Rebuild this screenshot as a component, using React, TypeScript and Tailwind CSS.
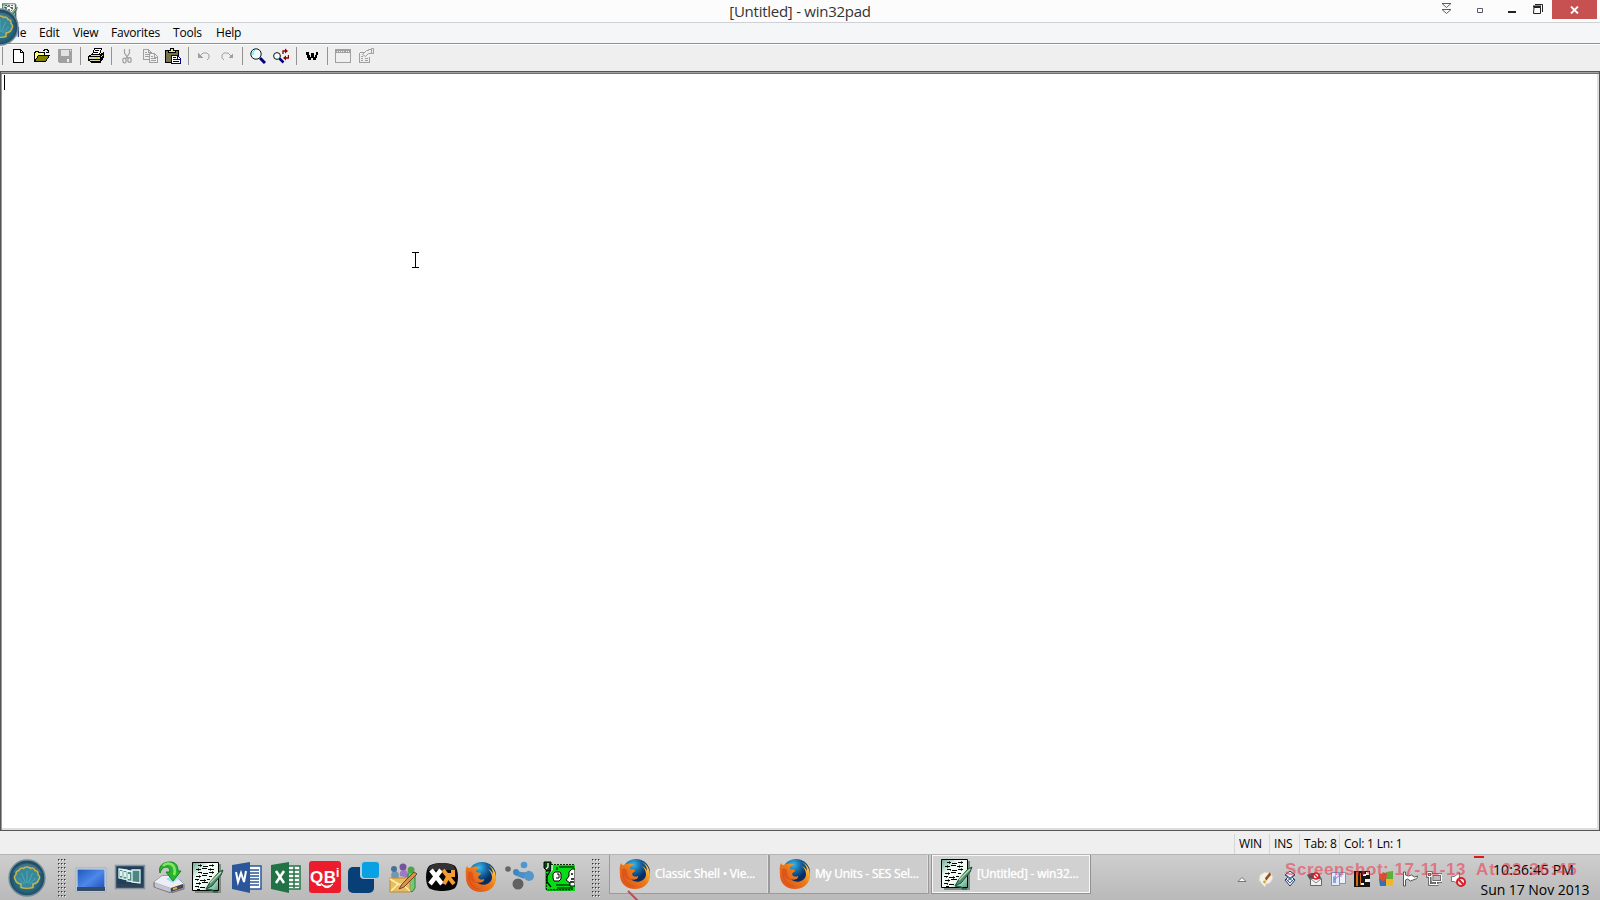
import React from "react";

/* -------------------------------------------------------------------------- */
/* Toolbar icons (16x16)                                                      */
/* -------------------------------------------------------------------------- */

function ToolIcon({ children }: { children: React.ReactNode }) {
  return (
    <button type="button" className="flex w-[23px] shrink-0 items-center justify-center">
      <svg width="16" height="16" viewBox="0 0 16 16" fill="none" shapeRendering="crispEdges">
        {children}
      </svg>
    </button>
  );
}

function Separator() {
  return (
    <div className="flex h-[18px] w-2 shrink-0 justify-center">
      <div className="w-px bg-[#929292]" />
    </div>
  );
}

function Toolbar() {
  return (
    <div className="flex h-[26px] shrink-0 items-center bg-[#efefef] pb-[4px] pl-[2px]">
      <div className="mr-1 h-[18px] w-px bg-[#929292]" />
      <ToolIcon>
        <path d="M2.5 1.5h7l3 3v10h-10z" fill="#fff" stroke="#000" />
        <path d="M9.5 1.5v3h3" stroke="#000" />
      </ToolIcon>
      <ToolIcon>
        <path d="M.5 13.5v-9h1v-1h3v1h6v3" fill="#ffff73" stroke="#000" />
        <path d="M.5 13.5l4-6h11l-4 6z" fill="#808000" stroke="#000" />
        <path d="M9 2.5h1v-1h3v1h1v2M12 4.5h3M14.5 2v3" stroke="#000" />
      </ToolIcon>
      <ToolIcon>
        <path d="M1 1h14v14H2v-1H1z" fill="#a0a0a0" />
        <path d="M4 2h8v6H4z" fill="#e2e2e2" />
        <path d="M10 11h2v3h-2zM13 2h1v1h-1z" fill="#efefef" />
      </ToolIcon>
      <Separator />
      <ToolIcon>
        <path d="M4.5 6.5l2-6h7l-2 6z" fill="#fff" stroke="#000" />
        <path d="M7 2.5h4M6 4.5h4" stroke="#000" />
        <path d="M.5 8.5l3-2h9l3-2v5l-3 4h-9l-3-1z" fill="#d5d5bd" stroke="#000" />
        <path d="M1 8.5h11l3-3M1 11.5h11l3-3M12.5 8v5M3 14.5h9l2-3" stroke="#000" />
        <path d="M8 10.5h2" stroke="#e2d900" />
      </ToolIcon>
      <Separator />
      <ToolIcon>
        <g stroke="#a0a0a0" shapeRendering="auto" strokeWidth="1.2">
          <path d="M5.500 1v4l4 6M10.500 1v4L6.500 11" />
          <ellipse cx="5.5" cy="12.5" rx="1.700" ry="2.300" />
          <ellipse cx="10.500" cy="12" rx="1.700" ry="2.300" />
        </g>
      </ToolIcon>
      <ToolIcon>
        <path d="M1.5 1.5h5l3 3v7h-8zM6.5 1.5v3h3" stroke="#a0a0a0" />
        <path d="M7.5 5.5h5l3 3v6h-8z" fill="#efefef" stroke="#a0a0a0" />
        <path d="M3 4.5h2M3 6.5h4M3 8.5h4M9 8.5h2M9 10.5h5M9 12.5h5M12.5 5v4h3" stroke="#a0a0a0" />
      </ToolIcon>
      <ToolIcon>
        <path d="M.5 2.5h13v12H.5z" fill="#777346" stroke="#000" />
        <path d="M3.5 4.5v-2h2v-2h3v2h2v2z" fill="#f0e65a" stroke="#000" />
        <path d="M6.5 7.5h6l3 3v5h-9z" fill="#fff" stroke="#000080" />
        <path d="M8 9.5h3M8 11.5h5M8 13.5h6M12.5 7v4h3" stroke="#000080" />
      </ToolIcon>
      <Separator />
      <ToolIcon>
        <path d="M2 5v5h5z" fill="#a0a0a0" />
        <path d="M4 8l3-3h4l2 2v3l-2 2" stroke="#a0a0a0" shapeRendering="auto" />
      </ToolIcon>
      <ToolIcon>
        <path d="M14 5v5H9z" fill="#a0a0a0" />
        <path d="M12 8L9 5H5L3 7v3l2 2" stroke="#a0a0a0" shapeRendering="auto" />
      </ToolIcon>
      <Separator />
      <ToolIcon>
        <g shapeRendering="auto">
          <circle cx="6" cy="6" r="5.2" fill="#edffff" stroke="#111" />
          <path d="M3 7V4l2-2" stroke="#42dada" />
          <path d="M10 10l5 5" stroke="#000080" strokeWidth="3" />
        </g>
      </ToolIcon>
      <ToolIcon>
        <g shapeRendering="auto">
          <circle cx="4" cy="8" r="3.4" fill="#edffff" stroke="#111" />
          <path d="M6.5 10.5l4 4" stroke="#000080" strokeWidth="2.5" />
          <path d="M10 6V3h3M15.5 7v3h-3" stroke="#8b0000" strokeWidth="1.3" />
          <path d="M12 .5v5L15 3zM13 7.500v5L10 10z" fill="#8b0000" />
        </g>
      </ToolIcon>
      <Separator />
      <ToolIcon>
        <path
          d="M2 4h3v3h1v2h1V5h3v4h1V7h1V4h2v3h-1v3h-1v2H9v-2H8V8v2H7v2H4v-2H3V7H2z"
          fill="#000"
        />
      </ToolIcon>
      <Separator />
      <ToolIcon>
        <path d="M.5 1.5h15v13H.5z" stroke="#a0a0a0" />
        <path d="M1 2h14v3H1z" fill="#a0a0a0" />
        <path d="M2 3.5h8M11 3.5h1M13 3.5h1" stroke="#eee" strokeDasharray="1 1" />
      </ToolIcon>
      <ToolIcon>
        <path d="M1.5 4.5h5M1.5 4.5v10h10V9" stroke="#a0a0a0" />
        <path d="M3 8.5h2M3 10.5h2M7 10.5h3M3 12.5h2M7 12.5h3" stroke="#a0a0a0" />
        <path d="M4.500 6.500l4-4h2v-1h3v4h-3l-3 3zM13.500 .5h2v5h-2z" fill="#efefef" stroke="#a0a0a0" shapeRendering="auto" />
      </ToolIcon>
    </div>
  );
}

/* -------------------------------------------------------------------------- */
/* Shared icons                                                               */
/* -------------------------------------------------------------------------- */

function ShellOrb() {
  return (
    <svg width="38" height="38" viewBox="0 0 38 38" fill="none">
      <defs>
        <radialGradient id="orb" cx="50%" cy="52%">
          <stop offset="0" stopColor="#3f93a6" />
          <stop offset=".6" stopColor="#2b6f86" />
          <stop offset="1" stopColor="#1d475f" />
        </radialGradient>
      </defs>
      <circle cx="19" cy="19" r="18" fill="url(#orb)" stroke="#718c99" strokeWidth="1.4" />
      <path d="M4 15a16 16 0 0 1 30 0c-5-5-25-5-30 0z" fill="#8eb3c2" opacity=".25" />
      <path
        d="M13 28.500v-3.500c-3-.5-5-2-5.500-4-1.500-2-1.500-4 .5-5.500-.5-2 1-4 3-4 .5-2 3-3 4.500-2 1.500-2 5.500-2 7 0 2-1 4 0 4.500 2 2 0 3.500 2 3 4 2 1.500 2 3.500.5 5.500-.5 2-2.500 3.500-5.500 4v3.500c-3 1-9 1-12 0z"
        fill="#38899c"
        stroke="#cdb548"
        strokeWidth="1.500"
      />
      <path d="M16.500 25l-6-6M17.500 24l-4-10M19 24V12M20.500 24l4-10M21.500 25l6-6" stroke="#4dabb5" />
    </svg>
  );
}

function NotepadIcon({ size }: { size: number }) {
  return (
    <svg width={size} height={size} viewBox="0 0 32 32" fill="none">
      <defs>
        <linearGradient id="pad" x1="0" y1="0" x2="1" y2="1">
          <stop offset="0" stopColor="#66a991" />
          <stop offset=".35" stopColor="#f3fff7" />
          <stop offset=".65" stopColor="#eefaf0" />
          <stop offset="1" stopColor="#449b7c" />
        </linearGradient>
      </defs>
      <path d="M3 3h26v29H3z" fill="#7f8c84" />
      <path d="M.5 1.5h26v28H.5z" fill="url(#pad)" stroke="#000" />
      <g shapeRendering="crispEdges" stroke="#000">
        <path d="M6 4.500h4M11 5.500h5M17 4.500h5M4 8.500h5M10 7.500h5M16 8.500h6M6 11.500h4M11 12.500h5M17 11.500h5M4 15.500h5M10 14.500h5M17 15.500h3" />
        <path d="M3 18.500h4M8 19.500h6M15 18.500h3M4 22.500h5M10 21.500h6M3 25.500h4M8 26.500h5M5 28.500h3" />
        <path d="M8 3v3M20 3v3M6 7v3M18 7v3M9 11v2M20 10v3M7 14v3M5 18v2M12 18v3M7 21v3M6 25v2" opacity=".6" />
      </g>
      <path d="M14 28l4-7L27 11l4-2-2 5-9 11z" fill="#508f70" stroke="#164f38" />
      <path d="M18 22L29 11" stroke="#c1ddad" strokeWidth="1.3" />
      <path d="M14 28l6 1 2 2h4" stroke="#266348" strokeWidth="1.6" />
    </svg>
  );
}

function FirefoxIcon() {
  return (
    <svg width="32" height="32" viewBox="0 0 32 32">
      <defs>
        <radialGradient id="globe" cx="40%" cy="20%">
          <stop offset="0" stopColor="#31bbea" />
          <stop offset=".6" stopColor="#155f9d" />
          <stop offset="1" stopColor="#072e62" />
        </radialGradient>
        <linearGradient id="fox" x1="0" y1="1" x2="1" y2="0">
          <stop offset="0" stopColor="#d84b1c" />
          <stop offset=".55" stopColor="#ee7a18" />
          <stop offset="1" stopColor="#ffe34c" />
        </linearGradient>
      </defs>
      <circle cx="17" cy="15" r="14" fill="url(#globe)" />
      <path
        d="M2 5c1 2 2 2 3 2 3-2 7-2 10 0-3 0-4 2-4 4l5 1c0 2-2 2-3 4 1 3 4 3 6 2 1 2-3 5-7 3 4 5 14 3 15-4 0-5-2-7-4-9 3 1 4 3 5 5 0-4-2-7-5-9 6 3 8 8 8 13 0 8-6 14-15 14C7 31 1 25 1 17 1 12 0 9 2 5z"
        fill="url(#fox)"
      />
      <path d="M3 11c2-1 4 0 5 1 0 4 1 8 5 10-4 0-7-2-8-5 0 5 5 11 12 11-9 2-15-7-14-17z" fill="#d8491d" opacity=".65" />
    </svg>
  );
}

/* -------------------------------------------------------------------------- */
/* Quick launch                                                               */
/* -------------------------------------------------------------------------- */

function Launch({ children }: { children: React.ReactNode }) {
  return (
    <div className="flex h-8 w-[39px] shrink-0 items-center justify-center">
      <svg width="32" height="32" viewBox="0 0 32 32" fill="none">
        {children}
      </svg>
    </div>
  );
}

function QuickLaunch() {
  return (
    <div className="flex w-[507px] items-center">
      <Launch>
        <defs>
          <linearGradient id="screen" x1="0" y1="0" x2="1" y2="1">
            <stop stopColor="#2057ba" />
            <stop offset=".5" stopColor="#4e88eb" />
            <stop offset="1" stopColor="#1b4cac" />
          </linearGradient>
        </defs>
        <path d="M1 7h30v24H1z" fill="#d6e3ef" stroke="#9bacbc" />
        <path d="M2.500 8.500h27v21h-27z" fill="url(#screen)" />
        <path d="M2 26h28v4H2z" fill="#344b69" />
      </Launch>
      <Launch>
        <path d="M1.500 4.500h29v23h-29z" fill="#213e5b" stroke="#8494a2" strokeWidth="1.500" />
        <path d="M3 23h26v3H3z" fill="#304256" />
        <g fill="#4c8781" stroke="#dff3f0" strokeWidth="1.300">
          <path d="M5 8l8 1v9l-8-1z" />
          <path d="M9 9l8 1v9l-8-1z" />
          <path d="M13 10l8 1v10l-8-1z" />
          <path d="M18 9h8v13l-8-1z" />
        </g>
        <path d="M7 10v5M11 11v5M15 13v5" stroke="#d9f2ea" strokeWidth="2" />
      </Launch>
      <Launch>
        <path d="M1 21l8-6h13l9 8v5l-13 4L1 26z" fill="#a8a9b5" stroke="#737480" />
        <path d="M1 21l8-6h13l9 8-13 4z" fill="#ededf5" />
        <path d="M2 22l15 5v4L2 26z" fill="#c5c5d1" />
        <path d="M18 27l12-4v4l-12 4z" fill="#454753" />
        <path d="M20 28l4-1" stroke="#e5ad24" strokeWidth="2" />
        <path d="M13 18l7 4 6-5-6-3z" fill="#9fdcf2" />
        <path d="M7 12C5 5 10 1 17 1c6 0 8 4 8 9h3l-8 10-7-9h4c0-3-1-5-4-5s-5 3-6 6z" fill="#28b72b" stroke="#128221" />
        <path d="M10 5c3-4 9-3 11 1 1 3 1 6 0 8" stroke="#83e667" strokeWidth="2.500" />
      </Launch>
      <div className="flex w-[39px] justify-center">
        <NotepadIcon size={32} />
      </div>
      <Launch>
        <path d="M18 5h12v23H18z" fill="#fff" stroke="#2b579a" strokeWidth="1.500" />
        <path d="M19 9h9M19 12h9M19 15h9M19 18h9M19 21h9M19 24h9" stroke="#2b579a" strokeWidth="1.500" />
        <path d="M1 4l18-3v31L1 28z" fill="#2b579a" />
        <path d="M5 11l2 10 3-9 3 9 2-11" stroke="#fff" strokeWidth="2" />
      </Launch>
      <Launch>
        <path d="M18 5h12v23H18z" fill="#fff" stroke="#217346" strokeWidth="1.500" />
        <path d="M19 9h10M19 13h10M19 17h10M19 21h10M19 25h10M24 6v21" stroke="#217346" strokeWidth="1.500" />
        <path d="M1 4l18-3v31L1 28z" fill="#217346" />
        <path d="M6 10l8 12M14 10L6 22" stroke="#fff" strokeWidth="2.500" />
      </Launch>
      <Launch>
        <rect width="32" height="32" rx="3" fill="#ed1c2d" />
        <text x="1" y="22" fontSize="17" fontWeight="bold" fontFamily="Liberation Sans, sans-serif" fill="#fff" textLength="26">
          QB
        </text>
        <text x="27" y="16" fontSize="12" fontWeight="bold" fontFamily="Liberation Sans, sans-serif" fill="#fff">
          i
        </text>
        <path d="M12 22c3 4 7 4 12 1-4 5-9 5-12-1z" fill="#fff" stroke="#fff" />
      </Launch>
      <Launch>
        <rect x="0" y="6" width="26" height="26" rx="5" fill="#073f76" />
        <rect x="12" y="0" width="19" height="18" rx="4" fill="#b8cdda" />
        <rect x="14" y="1" width="17" height="16" rx="3" fill="#09a0e4" />
      </Launch>
      <div className="flex h-8 w-[39px] justify-center pl-[3px]">
        <svg width="32" height="32" viewBox="0 0 32 32" fill="none">
          <path d="M4 17c-2-4 0-7 3-7s5 3 3 8z" fill="#7197b1" />
          <circle cx="6" cy="8" r="3" fill="#486f98" />
          <path d="M12 15c-1-4 1-6 4-6s5 3 4 8z" fill="#9b7bc6" />
          <circle cx="15" cy="6" r="3.500" fill="#75539d" />
          <path d="M20 28V14c0-4 6-4 7 0v13l-3 4z" fill="#72c978" stroke="#2c8237" />
          <circle cx="23" cy="9" r="3.500" fill="#51a34b" />
          <path d="M2 17h20v14H2z" fill="#e8bd62" stroke="#bc8b32" />
          <path d="M2 18l10 6 10-6M3 30l7-7M14 23l8 7" stroke="#fff0a6" strokeWidth="1.500" />
          <path d="M11 28l3-5L26 11l3 2-13 13z" fill="#d8914a" stroke="#6d4527" />
        </svg>
      </div>
      <Launch>
        <path d="M3 5C8 1 24 1 29 5c4 4 4 18 0 22-5 4-21 4-26 0-4-4-4-18 0-22z" fill="#060606" />
        <path d="M4 5c6-4 18-4 24 0l2 4H2z" fill="#333" />
        <path d="M5 9l11 14M15 9L4 23" stroke="#fff" strokeWidth="4.500" />
        <path d="M27 9v5h-4l-5 9M17 9l11 14" stroke="#f79b2e" strokeWidth="4" />
      </Launch>
      <div className="flex w-[39px] justify-center">
        <FirefoxIcon />
      </div>
      <div className="flex h-8 w-[39px] justify-center pl-[3px]">
        <svg width="32" height="32" viewBox="0 0 32 32" fill="none">
          <path d="M10 10l10 3c2 1 3-2 4-3M9 13l10 4" stroke="#488ec7" strokeWidth="1.500" />
          <path d="M10 9c4 4 8 2 13 2v7c-4-1-9-3-13-4z" fill="#488ec7" />
          <circle cx="3" cy="8" r="2.800" fill="#666" />
          <circle cx="19" cy="4" r="3.300" fill="#5197ce" />
          <circle cx="11" cy="11" r="3" fill="#3e86c0" />
          <circle cx="24" cy="15" r="5" fill="#5196cd" />
          <circle cx="13" cy="23" r="5.500" fill="#616161" />
        </svg>
      </div>
      <Launch>
        <path d="M3 4h29v26H4l-2-2V7h1z" fill="#05dc15" />
        <path d="M8 3.500h24M3.500 9v20h25M7 28.500h24" stroke="#003a00" strokeDasharray="2 1" />
        <path d="M14 6v3M16 6h15M13 24h17M14 27h16" stroke="#000" />
        <path d="M1 1h7v9H4L1 7z" fill="#07470b" stroke="#000" />
        <path d="M5 2v4l-2 2M9 4v5l-3 3" stroke="#fff" strokeWidth="1.300" />
        <path d="M8 9l-4 6v6l4 5" stroke="#000" strokeWidth="1.300" />
        <path d="M12 11h5l1 2v5l-2 2h-5l-1-3v-4z" fill="#fff" stroke="#000" />
        <path d="M14 13h2v4h-3" stroke="#000" />
        <path d="M32 8h-3l-3 3v4l-3 4 4 3v3h5z" fill="#fff" stroke="#000" />
        <path d="M28 13h2M28 18h3M27 21h4" stroke="#000" strokeWidth="1.500" />
      </Launch>
    </div>
  );
}

/* -------------------------------------------------------------------------- */
/* Task bar                                                                   */
/* -------------------------------------------------------------------------- */

function Grip() {
  return (
    <svg width="9" height="38" viewBox="0 0 9 38" shapeRendering="crispEdges">
      {Array.from({ length: 10 }, (_, row) =>
        [0, 3, 6].map((x) => (
          <g key={`${row}-${x}`}>
            <rect x={x} y={row * 4} width="2" height="2" fill="#f4f4f4" />
            <rect x={x} y={row * 4} width="1" height="1" fill="#333" />
            <rect x={x + 1} y={row * 4} width="1" height="1" fill="#888" />
            <rect x={x} y={row * 4 + 1} width="1" height="1" fill="#888" />
          </g>
        )),
      )}
    </svg>
  );
}

function TaskButton({
  title,
  icon,
  active = false,
}: {
  title: string;
  icon: React.ReactNode;
  active?: boolean;
}) {
  return (
    <button
      type="button"
      className={[
        "flex h-10 w-[160px] shrink-0 items-center border pl-[9px] text-left text-[12px] text-white",
        active
          ? "border-[#929292] bg-[#d1d1d1] shadow-[inset_0_0_0_1px_#f8f8f8]"
          : "border-[#9b9b9b] bg-[#cdcdcd] shadow-[inset_-1px_0_#dfdfdf]",
      ].join(" ")}
    >
      {icon}
      <span className="ml-1 whitespace-nowrap tracking-[-0.2px] [text-shadow:0_0_1px_white]">
        {title}
      </span>
    </button>
  );
}

function TrayIcon({ children }: { children: React.ReactNode }) {
  return (
    <div className="flex w-6 shrink-0 justify-center">
      <svg width="16" height="16" viewBox="0 0 16 16" fill="none">
        {children}
      </svg>
    </div>
  );
}

function Tray() {
  return (
    <div className="ml-auto flex h-12 w-[371px] items-start">
      <div className="flex w-[241px] pt-[16px] pl-[1px]">
        <TrayIcon>
          <path d="M4 10.500l4-4 4 4z" fill="#f8f8f8" stroke="#777" />
        </TrayIcon>
        <TrayIcon>
          <path d="M4 13l-3-4 1-5 5-3 6 1 2 5-3 5-4 1-1 3z" fill="#f6f1e7" stroke="#d8d4cc" />
          <path d="M12 1L7 7l1 3 5-6z" fill="#9a501e" />
          <circle cx="6.500" cy="11" r="1.400" fill="#e3a132" />
        </TrayIcon>
        <TrayIcon>
          <path d="M8 0l5 4-3 2 3 3-5 6-5-6 3-3-3-2z" fill="#eef5ff" stroke="#283e61" />
          <path d="M4 4l4 3 4-3M4 8l4 4 4-4M5 6l6 4M11 6l-6 4" stroke="#3f5e8c" />
        </TrayIcon>
        <TrayIcon>
          <path d="M1 4l4-2h8l2 5-4 2H4z" fill="#555" />
          <path d="M4.500 7.500h11v7h-11z" fill="#f1f1f1" stroke="#666" />
          <path d="M5 8l5 4 5-4" stroke="#888" />
          <circle cx="10" cy="5" r="3" fill="#fff" stroke="#d71c2d" strokeWidth="1.500" />
          <path d="M8 3l4 4" stroke="#d71c2d" strokeWidth="1.500" />
        </TrayIcon>
        <TrayIcon>
          <path d="M1.500 1.500h8v13h-8z" fill="#e4ecff" stroke="#7c8bcb" />
          <path d="M9.500 1.500h6v11h-6z" fill="#eef0fb" stroke="#8d8db8" />
          <path d="M3 12V6l3-2v8" fill="#88a7e0" />
          <path d="M4 9l7-6M11 3v3M11 3H8" stroke="#8d77b8" />
        </TrayIcon>
        <TrayIcon>
          <path d="M0 0h16v16H0z" fill="#151515" />
          <path d="M2 1h2v14H2zM6 2h1v12H6z" fill="#d26c16" />
          <path d="M9 3h3v2H9zM12 1h3v3h-3zM11 8h5v3h-5zM7 12h3v2H7z" fill="#f5efe7" />
        </TrayIcon>
        <TrayIcon>
          <path d="M1 3h7v5H1z" fill="#e4552e" />
          <path d="M8 1l7-1v8H8z" fill="#62ad37" />
          <path d="M1 8h7v7H2z" fill="#2f70b8" />
          <path d="M8 8h7v7l-7-1z" fill="#f1b52a" />
          <path d="M5 1l4 2-1 6-4 2-2-4z" fill="#d94d32" />
        </TrayIcon>
        <TrayIcon>
          <path d="M1.500 1v14h2V9l2-1 3 2 5-2c1 0 2-1 2-3l-3 1-3-2-3 1-3-1V1z" fill="#fff" stroke="#555" />
        </TrayIcon>
        <TrayIcon>
          <path d="M6 3.500h9.500v7H6z" fill="#bbb" stroke="#555" strokeWidth="2.500" />
          <path d="M1.500 1.500h4v4h-4zM3.500 6v7.500h9M10.500 11v2" stroke="#555" strokeWidth="2.500" />
          <path d="M6 3.500h9.500v7H6z" stroke="#fff" />
          <path d="M1.500 1.500h4v4h-4zM3.500 6v7.500h9M10.500 11v2" stroke="#fff" />
        </TrayIcon>
        <TrayIcon>
          <path d="M1.500 5.500h3l5-4v13l-5-4h-3z" fill="#fff" stroke="#777" />
          <circle cx="11" cy="11" r="4" fill="#f4e9e8" stroke="#d51e25" strokeWidth="2" />
          <path d="M8.500 8.500l5 5" stroke="#d51e25" strokeWidth="2" />
        </TrayIcon>
      </div>
      <div className="flex w-[130px] flex-col items-center pt-[5px] text-[14px] leading-5 whitespace-nowrap text-black">
        <span className="-ml-[3px] tracking-[0.1px]">10:36:45 PM</span>
        <span className="tracking-[-0.05px]">Sun 17 Nov 2013</span>
      </div>
    </div>
  );
}

function Taskbar() {
  return (
    <div className="relative flex h-[46px] shrink-0 items-start overflow-hidden border-t border-[#b5b5b5] bg-linear-to-b from-[#cecece] to-[#b9b9b9]">
      <div className="ml-2 pt-[4px]">
        <ShellOrb />
      </div>
      <div className="ml-3 w-[13px] pt-[4px]">
        <Grip />
      </div>
      <div className="pt-[6px]">
        <QuickLaunch />
      </div>
      <div className="ml-[14px] w-[17px] pt-[4px]">
        <Grip />
      </div>
      <div className="-mt-px flex">
        <TaskButton title="Classic Shell • Vie..." icon={<FirefoxIcon />} />
        <TaskButton title="My Units - SES Sel..." icon={<FirefoxIcon />} />
        <div className="w-[2px]" />
        <TaskButton title="[Untitled] - win32..." icon={<NotepadIcon size={32} />} active />
      </div>
      <Tray />
      <svg className="absolute top-[35px] left-[627px]" width="14" height="12">
        <path d="M1 1l11 11" stroke="#b94d57" strokeWidth="2" />
      </svg>
      <div className="absolute top-px left-[1474px] h-[2px] w-[10px] bg-[#dd1a1a]" />
      {/* Capture stamp */}
      <div className="absolute top-[5px] left-[1285px] flex font-['Liberation_Sans',sans-serif] text-[17px] leading-5 font-bold whitespace-nowrap text-[#f02d45]/55">
        <span className="w-[191px] tracking-[0.55px]">Screenshot: 17-11-13</span>
        <span className="tracking-[1px]">At 22:36:45</span>
      </div>
    </div>
  );
}

/* -------------------------------------------------------------------------- */
/* Editor window                                                              */
/* -------------------------------------------------------------------------- */

function TitleBar() {
  return (
    <header className="relative flex h-[23px] shrink-0 items-start justify-center border-b border-[#cfd1d4] bg-[#fcfcfc]">
      <h1 className="text-[15px] leading-[22px] tracking-[-0.26px] text-[#333]">[Untitled] - win32pad</h1>
      <div className="absolute top-[3px] left-[2px]">
        <NotepadIcon size={16} />
      </div>
      <div className="absolute top-0 right-[3px] flex h-[19px] items-start">
        <svg width="112" height="19" viewBox="0 0 112 19" fill="none">
          <path d="M2 3.500h9l-4.500 4zM2 9.500h9l-4.500 4z" stroke="#5c5c69" />
          <path d="M37.500 8.500h5v4h-5z" stroke="#5c5c69" />
          <path d="M68 12h8" stroke="#222" strokeWidth="2" />
          <path d="M94 7.500h6.500v6H93.500zM95 4.500h7.500V12" stroke="#222" />
          <path d="M93 6.500h8" stroke="#222" strokeWidth="2" />
        </svg>
        <div className="flex h-[19px] w-[45px] items-center justify-center bg-[#c75050]">
          <svg width="9" height="8" viewBox="0 0 9 8">
            <path d="M1 0.500l7 7M8 .500l-7 7" stroke="#fff" strokeWidth="1.800" />
          </svg>
        </div>
      </div>
    </header>
  );
}

const MENU = [
  { label: "File", width: "w-[31px]" },
  { label: "Edit", width: "w-[34px]" },
  { label: "View", width: "w-[38px]" },
  { label: "Favorites", width: "w-[62px]" },
  { label: "Tools", width: "w-[43px]" },
  { label: "Help", width: "w-[40px]" },
];

function MenuBar() {
  return (
    <nav className="relative flex h-[22px] shrink-0 border-b border-white bg-[#f5f6f7] pl-2 shadow-[inset_0_-1px_#929292]">
      {MENU.map(({ label, width }) => (
        <span key={label} className={`${width} text-[12px] leading-[20px] tracking-[-0.2px] text-black`}>
          {label}
        </span>
      ))}
      {/* Start orb poking out from the screen edge */}
      <div className="absolute top-[-15px] left-[-19px]">
        <ShellOrb />
      </div>
    </nav>
  );
}

function StatusBar() {
  return (
    <footer className="flex h-[23px] shrink-0 items-center justify-end bg-[#efefef] pt-[2px] pr-1 text-[12px] leading-5 tracking-[-0.2px] whitespace-nowrap text-black">
      <span className="w-[35px] border-l border-[#d5d5d5] pl-1">WIN</span>
      <span className="w-[30px] border-l border-[#d5d5d5] pl-1">INS</span>
      <span className="w-[40px] border-l border-[#d5d5d5] pl-1">Tab: 8</span>
      <span className="w-[257px] border-l border-[#d5d5d5] pl-1">Col: 1 Ln: 1</span>
    </footer>
  );
}

export default function App() {
  return (
    <div className="flex h-[900px] w-[1600px] flex-col overflow-hidden bg-[#efefef] font-['Open_Sans','Noto_Sans',sans-serif]">
      <TitleBar />
      <MenuBar />
      <Toolbar />
      <main className="relative min-h-0 flex-1 border border-[#555] bg-white shadow-[inset_0_1px_#a0a0a0,inset_0_2px_#707070,inset_1px_0_#999,inset_-2px_-2px_#dedede]">
        <div className="mt-[3px] ml-[3px] h-[15px] w-px bg-black" />
        <svg className="absolute top-[180px] left-[410px]" width="9" height="16" shapeRendering="crispEdges">
          <path d="M1 .5h7M1 15.500h7M4.500 1v14" stroke="#000" />
        </svg>
      </main>
      <StatusBar />
      <Taskbar />
    </div>
  );
}
